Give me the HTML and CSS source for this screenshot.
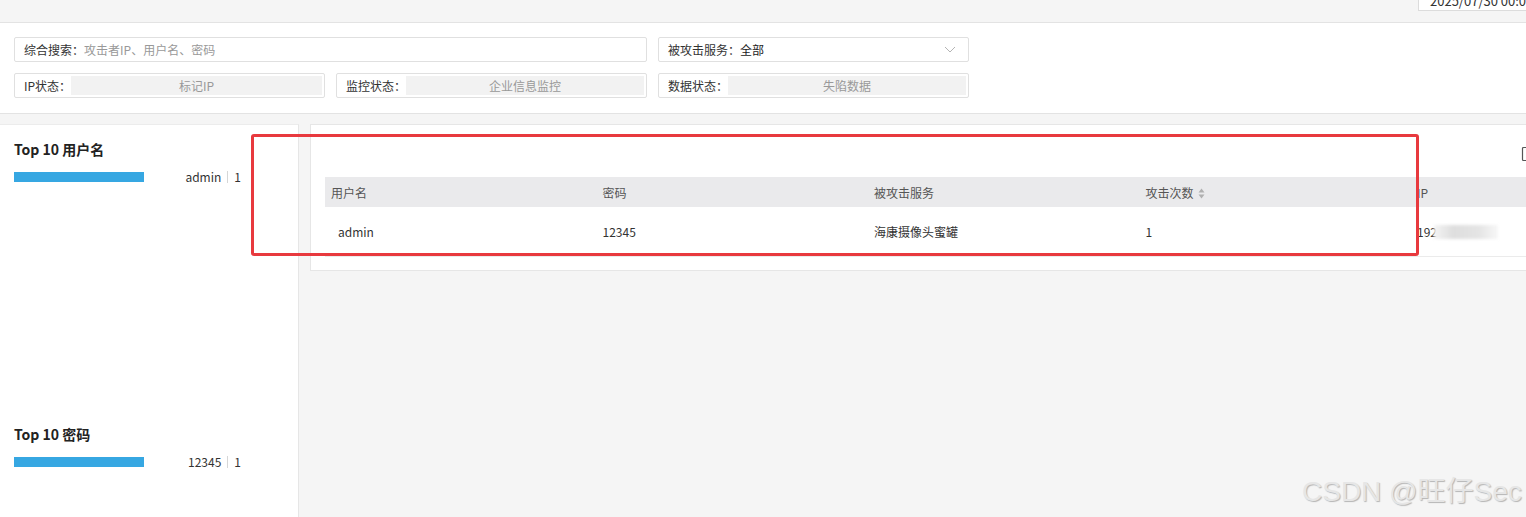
FILE: index.html
```html
<!DOCTYPE html>
<html lang="zh-CN">
<head>
    <meta charset="UTF-8">
    <title>攻击者画像 - 用户名密码</title>
    <link rel="stylesheet" href="styles.css">
</head>
<body>

<div class="topbar">
    <div class="date">2025/07/30 00:00:00</div>
</div>

<div class="filters">
    <div class="field wide">
        <span class="label">综合搜索：</span>
        <span class="placeholder">攻击者IP、用户名、密码</span>
    </div>
    <div class="field">
        <span class="label">被攻击服务：</span>
        <span class="value">全部</span>
        <svg class="chevron" width="12" height="7" viewBox="0 0 12 7">
            <path d="M1 1 L6 6 L11 1" fill="none" stroke="#b4b4b4" stroke-width="1"/>
        </svg>
    </div>
    <div class="field">
        <span class="label">IP状态：</span>
        <span class="select">标记IP</span>
    </div>
    <div class="field">
        <span class="label">监控状态：</span>
        <span class="select">企业信息监控</span>
    </div>
    <div class="field">
        <span class="label">数据状态：</span>
        <span class="select">失陷数据</span>
    </div>
</div>

<div class="main">
    <aside class="side">
        <div class="block">
            <h3>Top 10 用户名</h3>
            <div class="rank">
                <span class="bar"></span>
                <span class="count">admin<i></i>1</span>
            </div>
        </div>
        <div class="block">
            <h3>Top 10 密码</h3>
            <div class="rank">
                <span class="bar"></span>
                <span class="count">12345<i></i>1</span>
            </div>
        </div>
    </aside>

    <section class="panel">
        <div class="tools">
            <svg width="16" height="16" viewBox="0 0 16 16">
                <rect x="1.5" y="1.5" width="13" height="13" rx="1" fill="none" stroke="#555" stroke-width="1.2"/>
            </svg>
        </div>
        <table class="grid">
            <thead>
            <tr>
                <th>用户名</th>
                <th>密码</th>
                <th>被攻击服务</th>
                <th>攻击次数
                    <svg class="sort" width="7" height="11" viewBox="0 0 7 11">
                        <path d="M3.5 0.5 L6.5 4.5 L0.5 4.5 Z" fill="#b0b0b0"/>
                        <path d="M3.5 10.5 L6.5 6.5 L0.5 6.5 Z" fill="#b0b0b0"/>
                    </svg>
                </th>
                <th>IP</th>
                <th></th>
            </tr>
            </thead>
            <tbody>
            <tr>
                <td class="first">admin</td>
                <td>12345</td>
                <td>海康摄像头蜜罐</td>
                <td>1</td>
                <td>192<span class="blur"></span></td>
                <td></td>
            </tr>
            </tbody>
        </table>
    </section>
</div>

<div class="mark"></div>
<div class="watermark">CSDN @旺仔Sec</div>

</body>
</html>
```

FILE: styles.css
```css
* {
    box-sizing: border-box;
}

body {
    margin: 0;
    background-color: #f5f5f5;
    font-family: "Noto Sans CJK SC", "Noto Sans", sans-serif;
    font-size: 12px;
    color: #333;
    overflow: hidden;
    height: 517px;
    position: relative;
}

.topbar {
    height: 23px;
    border-bottom: 1px solid #e3e3e3;
    display: flex;
    justify-content: flex-end;
    overflow: hidden;
}

.topbar .date {
    width: 108px;
    height: 30px;
    margin-top: -19px;
    background-color: #fff;
    border: 1px solid #dcdcdc;
    border-right: none;
    padding: 12px 0 0 11px;
    font-size: 13px;
    line-height: 14px;
    color: #333;
    white-space: nowrap;
    overflow: hidden;
}

.filters {
    background-color: #fff;
    border-bottom: 1px solid #e3e3e3;
    padding: 14px 14px 15px;
    display: grid;
    grid-template-columns: 311px 311px 311px;
    grid-auto-rows: 25px;
    column-gap: 11px;
    row-gap: 11px;
}

.field {
    border: 1px solid #e0e0e0;
    border-radius: 2px;
    display: flex;
    align-items: center;
    padding: 2px 2px 2px 9px;
    white-space: nowrap;
}

.field.wide {
    grid-column: span 2;
}

.field .label {
    color: #333;
}

.field .placeholder {
    color: #999;
}

.field .value {
    color: #222;
}

.field .chevron {
    margin-left: auto;
    margin-right: 10px;
}

.field .select {
    flex: 1;
    align-self: stretch;
    background-color: #f2f2f2;
    color: #999;
    display: flex;
    align-items: center;
    justify-content: center;
}

.main {
    display: flex;
    gap: 11px;
    padding-top: 10px;
    height: 403px;
    overflow: hidden;
}

.side {
    width: 299px;
    flex-shrink: 0;
    background-color: #fff;
    border-top: 1px solid #ececec;
    border-right: 1px solid #e6e6e6;
}

.side .block {
    height: 285px;
    padding: 14px 14px 0;
}

.side h3 {
    margin: 0;
    font-size: 14px;
    line-height: 20px;
    font-weight: bold;
    color: #222;
}

.rank {
    width: 227px;
    margin-top: 11px;
    display: flex;
    align-items: center;
    justify-content: space-between;
}

.rank .bar {
    width: 130px;
    height: 10px;
    background-color: #36a7e2;
}

.rank .count {
    line-height: 14px;
    color: #333;
    display: flex;
    align-items: center;
}

.rank .count i {
    width: 1px;
    height: 12px;
    margin: 0 6px;
    background-color: #d6d6d6;
}

.panel {
    flex: 1;
    min-width: 0;
    height: 147px;
    background-color: #fff;
    border: 1px solid #e6e6e6;
    border-right: none;
    padding: 0 0 0 14px;
    overflow: hidden;
}

.tools {
    height: 52px;
    display: flex;
    align-items: center;
    padding-left: 1196px;
    padding-top: 5px;
}

.tools svg {
    flex-shrink: 0;
}

.grid {
    border-collapse: collapse;
    table-layout: fixed;
    width: 1202px;
}

.grid th {
    width: 271.5px;
    height: 30px;
    background-color: #eaeaec;
    text-align: left;
    font-weight: normal;
    color: #555;
    padding: 0 6px;
    white-space: nowrap;
}

.grid th:last-child {
    width: 0;
    padding: 0;
}

.grid .sort {
    margin-left: 2px;
    vertical-align: -1px;
}

.grid td {
    height: 49px;
    padding: 0 6px;
    color: #333;
    border-bottom: 1px solid #ebebeb;
    white-space: nowrap;
}

.grid td:last-child {
    padding: 0;
}

.grid td.first {
    padding-left: 13px;
}

.grid .blur {
    display: inline-block;
    width: 64px;
    height: 14px;
    vertical-align: -2px;
    margin-left: -3px;
    background: linear-gradient(90deg, #f4f4f4 0%, #dedede 30%, #e4e4e4 70%, #f7f7f7 100%);
    filter: blur(1.5px);
}

.mark {
    position: absolute;
    left: 251px;
    top: 134px;
    width: 1168px;
    height: 122px;
    border: 3px solid #e8393e;
    border-radius: 3px;
}

.watermark {
    position: absolute;
    left: 1302px;
    top: 469px;
    font-family: "Liberation Sans", "Noto Sans CJK SC", sans-serif;
    font-size: 28px;
    color: #e6e6e6;
    text-shadow: 1px 1px 1px #b5b5b5;
    white-space: nowrap;
}
```
